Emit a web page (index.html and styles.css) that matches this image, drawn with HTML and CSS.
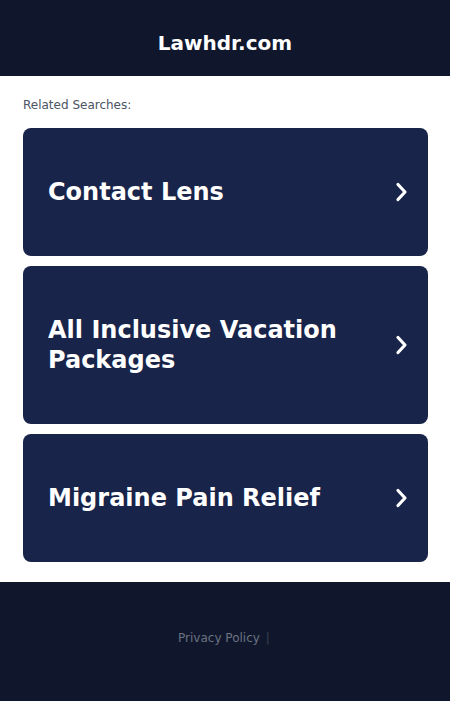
FILE: index.html
```html
<!DOCTYPE html>
<html lang="en">
<head>
    <meta charset="UTF-8">
    <meta name="viewport" content="width=device-width, initial-scale=1.0">
    <title>Lawhdr.com</title>
    <link rel="stylesheet" href="styles.css">
</head>
<body>
    <header class="site-header">
        <h1>Lawhdr.com</h1>
    </header>
    <main class="container">
        <p class="related-label">Related Searches:</p>
        <ul class="search-list">
            <li>
                <a class="search-card" href="#">
                    <span>Contact Lens</span>
                    <svg class="chevron" viewBox="0 0 24 24" width="24" height="24"><path d="M9 4.5l7 7.5-7 7.5"/></svg>
                </a>
            </li>
            <li>
                <a class="search-card" href="#">
                    <span>All Inclusive Vacation Packages</span>
                    <svg class="chevron" viewBox="0 0 24 24" width="24" height="24"><path d="M9 4.5l7 7.5-7 7.5"/></svg>
                </a>
            </li>
            <li>
                <a class="search-card" href="#">
                    <span>Migraine Pain Relief</span>
                    <svg class="chevron" viewBox="0 0 24 24" width="24" height="24"><path d="M9 4.5l7 7.5-7 7.5"/></svg>
                </a>
            </li>
        </ul>
    </main>
    <footer class="site-footer">
        <a href="#">Privacy Policy</a><span class="sep">|</span>
    </footer>
</body>
</html>
```

FILE: styles.css
```css
body {
    font-family: "DejaVu Sans", sans-serif;
    margin: 0;
    padding: 0;
    background-color: #fff;
}

.site-header {
    background-color: #10172d;
    color: white;
    text-align: center;
    height: 76px;
    display: flex;
    align-items: center;
    justify-content: center;
}

.site-header h1 {
    margin: 0;
    font-size: 20px;
    line-height: 28px;
    font-weight: bold;
    padding-top: 10px;
}

.container {
    padding: 21px 22px 20px 23px;
}

.related-label {
    margin: 0 0 15px;
    font-size: 12px;
    line-height: 16px;
    color: #4b5563;
}

.search-list {
    list-style-type: none;
    margin: 0;
    padding: 0;
    display: flex;
    flex-direction: column;
    gap: 10px;
}

.search-card {
    display: flex;
    align-items: center;
    justify-content: space-between;
    gap: 20px;
    padding: 49px 15px 49px 25px;
    background-color: #19244a;
    border-radius: 8px;
    color: white;
    text-decoration: none;
    font-size: 24px;
    line-height: 30px;
    font-weight: bold;
}

.chevron {
    flex-shrink: 0;
    fill: none;
    stroke: white;
    stroke-width: 3.2;
    stroke-linecap: round;
    stroke-linejoin: round;
}

.site-footer {
    background-color: #10172d;
    height: 119px;
    display: flex;
    align-items: center;
    justify-content: center;
    font-size: 12px;
    padding-bottom: 8px;
    padding-right: 2px;
    box-sizing: border-box;
}

.site-footer a {
    color: #6b7280;
    text-decoration: none;
}

.site-footer .sep {
    color: #374151;
    margin-left: 6px;
}
```
